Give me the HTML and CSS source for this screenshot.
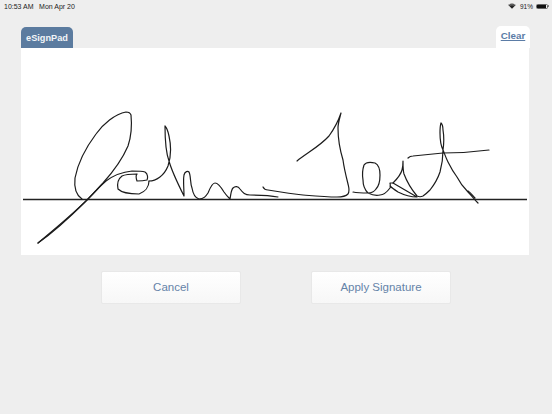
FILE: index.html
```html
<!DOCTYPE html>
<html lang="en">
<head>
    <meta charset="UTF-8" />
    <meta name="viewport" content="width=device-width, initial-scale=1.0" />
    <title>eSignPad</title>
    <link rel="stylesheet" href="styles.css">
</head>
<body>
    <!-- Status bar -->
    <div class="status-bar">
        <div class="status-left">
            <span>10:53 AM</span>
            <span>Mon Apr 20</span>
        </div>
        <div class="status-right">
            <svg class="wifi-icon" viewBox="0 0 12 9">
                <path d="M6 8.6 L0.4 3 C3.6 -0.2 8.4 -0.2 11.6 3 Z" fill="#222"/>
                <path d="M2.2 4.2 C4.4 2.3 7.6 2.3 9.8 4.2 M1 2.9 C3.9 0.3 8.1 0.3 11 2.9" fill="none" stroke="#eee" stroke-width="0.6"/>
            </svg>
            <span class="battery-text">91%</span>
            <div class="battery"><div class="battery-level" style="width: 91%;"></div></div>
            <div class="battery-tip"></div>
        </div>
    </div>

    <!-- Tabs above the pad -->
    <div class="tab-row">
        <div class="tab-title">eSignPad</div>
        <a class="tab-clear" href="#">Clear</a>
    </div>

    <!-- Signature pad -->
    <div class="sign-pad">
        <svg class="sign-canvas" viewBox="21 48 508 207">
            <path class="baseline" d="M23 199.5 H527"/>
            <path class="ink" d="M38 243 C55 229 72 215 88 199 C96 191 99 187 103 183 C112 173 122 160 128 146 C131 137 132 125 131 115 C130 112 128 112 126 112 C115 114 103 124 96 134 C87 146 78 162 75 178 C74 187 76 195 82 199"/>
            <path class="ink" d="M38 243 C55 231 70 217 85 202 C94 193 100 186 106 181 C114 175 122 172 132 171 C137 171 142 171 145 172 C148 174 148 178 147 180 C143 181 139 181 137 181 C136 178 136 175 137 174 C133 174 126 174 122 176 C118 179 117 184 118 189 C122 193 130 194 139 194 C145 192 149 187 149 181"/>
            <path class="ink" d="M149 181 C156 181 164 176 168 166 C171 157 171 145 169 136 C168 131 166 127 165 126 C165 135 165 150 169 161 C172 172 179 186 184 196 C184 188 183 180 184 175 C185 171 188 171 189 172 C191 176 190 183 192 188 C193 194 195 198 199 199 C204 199 206 196 208 193 C210 188 212 183 215 183 C218 183 221 187 224 192 C226 195 229 198 230 199 C231 194 231 190 233 188 C235 186 238 186 240 189 C243 193 245 195 250 195 C258 195 268 195 278 197"/>
            <path class="ink" d="M263 187 C264 189 265 190 268 190 C280 192 292 194 303 195 C315 196 326 197 337 197 C342 197 346 196 348 194 C350 191 349 188 348 184 C346 176 344 168 343 160 C340 150 338 140 338 128 C338 123 340 117 341 113 C338 122 334 129 329 136 C320 146 307 153 297 161"/>
            <path class="ink" d="M353 192 C358 193 363 193 368 193 C364 189 363 185 363 180 C362 174 363 168 364 165 C366 162 371 162 375 163 C379 165 380 170 380 175 C380 181 379 186 376 189 C374 192 370 193 368 193 C372 195 376 196 380 195 C384 195 387 192 390 188 C391 186 390 184 390 183 L393 183 C400 187 410 193 417 197 C411 197 404 195 398 192 C395 190 392 188 390 186"/>
            <path class="ink" d="M393 183 C397 179 401 174 402 170 C403 167 403 164 403 161 C403 166 403 171 404 174 C407 182 412 190 417 196 C419 197 421 197 423 196 C426 194 428 192 430 190 C434 185 438 178 440 172 C442 165 443 157 443 150 C444 143 444 136 443 130 C443 126 442 124 441 123 C440 126 440 129 440 133 C440 140 441 146 443 150 C445 155 446 158 448 162 C451 168 454 173 457 177 C460 183 464 188 468 192 C472 196 475 200 478 203"/>
            <path class="ink" d="M468 191 C471 193 473 196 475 198"/>
            <path class="ink" d="M408 158 C409 157 411 156 413 156 C423 155 433 154 443 153 C458 153 474 152 489 150"/>
        </svg>
    </div>

    <!-- Actions -->
    <div class="actions">
        <button class="action-btn">Cancel</button>
        <button class="action-btn">Apply Signature</button>
    </div>
</body>
</html>
```

FILE: styles.css
```css
body {
    margin: 0;
    height: 414px;
    overflow: hidden;
    background: #eeeeee;
    font-family: "Liberation Sans", Arial, sans-serif;
}
.status-bar {
    height: 12px;
    padding: 0 3px 0 4px;
    display: flex;
    justify-content: space-between;
    align-items: center;
    font-size: 7px;
    color: #222;
}
.status-left {
    display: flex;
    gap: 5.5px;
}
.status-right {
    display: flex;
    align-items: center;
}
.wifi-icon {
    width: 8px;
    height: 6px;
    margin-right: 3.5px;
}
.battery-text {
    font-size: 6.5px;
}
.battery {
    box-sizing: border-box;
    width: 12px;
    height: 5px;
    margin-left: 3px;
    border: 0.5px solid #666;
    border-radius: 1.5px;
}
.battery-level {
    height: 100%;
    background: #111;
}
.battery-tip {
    width: 1px;
    height: 2px;
    background: #888;
}
.tab-row {
    height: 22px;
    margin-top: 14px;
    padding: 0 22px 0 21px;
    display: flex;
    justify-content: space-between;
    align-items: flex-end;
}
.tab-title {
    width: 52px;
    height: 21px;
    line-height: 22px;
    text-align: center;
    background: #5b7b9f;
    color: #f2f5f8;
    font-size: 9.2px;
    font-weight: bold;
    border-radius: 5px 5px 0 0;
}
.tab-clear {
    width: 34px;
    height: 22px;
    line-height: 20px;
    text-align: center;
    background: white;
    color: #5b7ca6;
    font-size: 9.8px;
    font-weight: bold;
    border-radius: 5px 5px 0 0;
}
.sign-pad {
    height: 207px;
    margin: 0 23px 0 21px;
    background: white;
}
.sign-canvas {
    display: block;
    width: 100%;
    height: 100%;
}
.baseline {
    fill: none;
    stroke: #222;
    stroke-width: 1.3;
}
.ink {
    fill: none;
    stroke: #1c1c1c;
    stroke-width: 1.2;
    stroke-linecap: round;
    stroke-linejoin: round;
}
.actions {
    margin-top: 16px;
    padding-left: 101px;
    display: flex;
    gap: 70px;
}
.action-btn {
    width: 140px;
    height: 33px;
    padding: 0 0 2px;
    background: linear-gradient(#ffffff, #f7f7f7);
    border: 1px solid #e8e8e8;
    border-radius: 2px;
    color: #6583a8;
    font-family: inherit;
    font-size: 11.5px;
}
```
